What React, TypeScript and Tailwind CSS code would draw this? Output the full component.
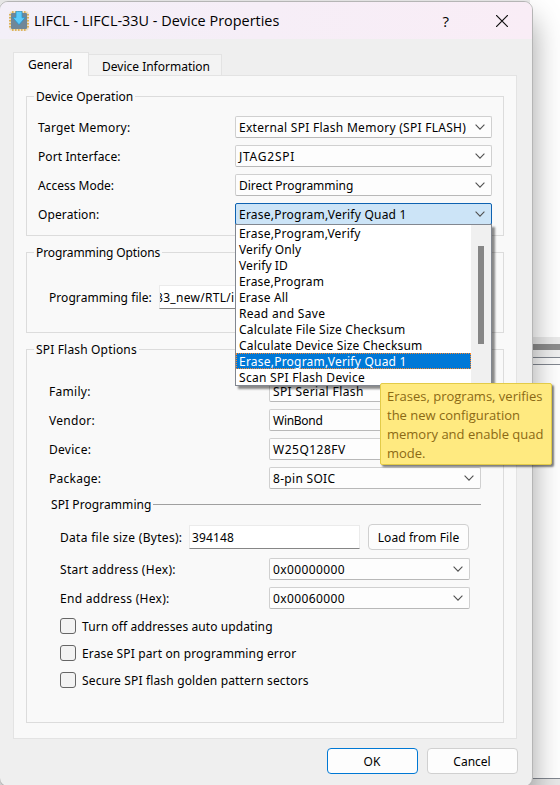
import type { ReactNode } from 'react';

function Chevron() {
  return (
    <svg className="ml-auto h-[6px] w-[10px] shrink-0" viewBox="0 0 10 6" fill="none" stroke="#505050" strokeWidth="1.1">
      <path d="M0.6 0.7 L5 5.1 L9.4 0.7" />
    </svg>
  );
}

function Select({ value, className, text = '', open = false }: { value: string; className: string; text?: string; open?: boolean }) {
  return (
    <div
      className={`flex h-[22px] shrink-0 items-center rounded-[2px] border pl-[3px] pr-[6px] ${
        open ? 'border-[#0e62b1] bg-[#cce4f7]' : 'border-[#d0d0d0] border-b-[#b8b8b8] bg-[#fdfdfd]'
      } ${className}`}
    >
      <span className={`pt-[2px] ${text}`}>{value}</span>
      <Chevron />
    </div>
  );
}

function Group({ title, titleClass = '', className, children }: { title: string; titleClass?: string; className: string; children: ReactNode }) {
  return (
    <section className={`flex flex-col border border-[#dcdcdc] ${className}`}>
      <div className="-mt-[9px] ml-[7px] flex h-4 items-center self-start bg-[#f9f9f9] px-[2px]">
        <span className={`pt-[2px] ${titleClass}`}>{title}</span>
      </div>
      {children}
    </section>
  );
}

function Row({ label, labelClass = '', children }: { label: string; labelClass?: string; children: ReactNode }) {
  return (
    <div className="flex h-[22px] items-center justify-between">
      <span className={`pt-[2px] ${labelClass}`}>{label}</span>
      {children}
    </div>
  );
}

function Check({ label, className }: { label: string; className: string }) {
  return (
    <div className="flex h-4 items-center gap-[6px]">
      <span className="h-4 w-4 rounded-[3px] border border-[#666] bg-[#f3f3f3]" />
      <span className={`pt-[2px] ${className}`}>{label}</span>
    </div>
  );
}

const operations = [
  { name: 'Erase,Program,Verify', fit: 'tracking-[0.2px]' },
  { name: 'Verify Only', fit: 'tracking-[0.1px]' },
  { name: 'Verify ID', fit: 'tracking-[0.1px]' },
  { name: 'Erase,Program', fit: 'tracking-[0.15px]' },
  { name: 'Erase All', fit: 'tracking-[0.2px]' },
  { name: 'Read and Save', fit: 'tracking-[0.3px]' },
  { name: 'Calculate File Size Checksum', fit: 'tracking-[0.21px]' },
  { name: 'Calculate Device Size Checksum', fit: 'tracking-[0.17px]' },
  { name: 'Erase,Program,Verify Quad 1', fit: 'tracking-[0.22px]' },
  { name: 'Scan SPI Flash Device', fit: 'tracking-[0.29px]' },
];

function ChipIcon() {
  return (
    <svg className="ml-[9px] h-5 w-5" viewBox="0 0 20 20">
      <rect x="1" y="1" width="18" height="18" rx="1" fill="#e9dcc0" stroke="#e9dcc0" strokeWidth="1" />
      <path d="M3 1h14M3 19h14M1 3v14M19 3v14" stroke="#d6a437" strokeWidth="1.6" strokeDasharray="1.6 1.4" />
      <rect x="2" y="2" width="16" height="16" rx="1" fill="#6f8798" />
      <path d="M7 0.4h6v6.2h3.2L10 13.8 3.8 6.6H7z" fill="#5bcbfa" stroke="#2b94cb" strokeWidth="0.8" />
    </svg>
  );
}

export default function App() {
  return (
    <div className="relative h-[785px] w-[560px] overflow-hidden bg-white font-['Noto_Sans','DejaVu_Sans',sans-serif] text-[12px] leading-4 whitespace-nowrap text-black">
      {/* window lying behind the dialog */}
      <div className="absolute inset-y-0 right-0 flex w-[40px] flex-col">
        <div className="h-[337px] bg-white" />
        <div className="h-[7px] bg-[#eaeaea]" />
        <div className="h-[6px] bg-[#8c8c8c]" />
        <div className="h-[7px] bg-[#f0f0f0]" />
        <div className="h-[8px] border-y border-[#828790] bg-[#fafafa]" />
        <div className="h-[413px] bg-white" />
        <div className="h-[7px] border-t border-[#828790] bg-[#e8e8e8]" />
      </div>
      <div className="absolute inset-x-0 top-0 h-4 w-[530px] bg-[#ececec]" />

      <main className="absolute top-[1px] -left-[1px] flex h-[786px] w-[534px] flex-col overflow-hidden rounded-[9px] border border-[#b5b5b5] bg-[#efefef] shadow-[0_18px_30px_rgba(0,0,0,0.38)]">
        <header className="flex h-[37px] shrink-0 items-center bg-linear-to-r from-[#f3eff8] to-[#f9edf6]">
          <ChipIcon />
          <h1 className="ml-[5px] font-['Open_Sans','Noto_Sans',sans-serif] text-[14.4px] tracking-[0.02px]">LIFCL - LIFCL-33U - Device Properties</h1>
          <span className="mr-[47px] ml-auto font-['Open_Sans','Noto_Sans',sans-serif] text-[15px]">?</span>
          <svg className="mr-[24px] h-3 w-3" viewBox="0 0 12 12" stroke="#111" strokeWidth="1.2">
            <path d="M0 0L12 12M12 0L0 12" />
          </svg>
        </header>

        <nav className="mt-[13px] ml-[13px] flex h-[24px] shrink-0 items-end">
          <div className="z-10 flex h-[24px] w-[76px] items-start border border-b-0 border-[#e3e3e3] bg-[#f9f9f9] pt-[4px] pl-[14px]">
            <span>General</span>
          </div>
          <div className="mb-[1px] flex h-[21px] w-[133px] items-center border border-b-0 border-l-0 border-[#e3e3e3] bg-[#f3f3f3] pt-[3px] pl-[13px]">
            <span>Device Information</span>
          </div>
        </nav>

        <div className="-mt-[1px] ml-[13px] flex h-[664px] w-[504px] shrink-0 flex-col border border-[#e3e3e3] bg-[#f9f9f9] pt-[20px] pl-[12px]">
          <Group title="Device Operation" className="h-[140px] w-[478px]">
            <div className="mt-[12px] mr-[11px] ml-[11px] flex flex-col gap-[7px]">
              <Row label="Target Memory:" labelClass="tracking-[0.22px]"><Select value="External SPI Flash Memory (SPI FLASH)" text="tracking-[0.27px]" className="w-[257px]" /></Row>
              <Row label="Port Interface:" labelClass="tracking-[0.1px]"><Select value="JTAG2SPI" text="tracking-[0.75px]" className="w-[257px]" /></Row>
              <Row label="Access Mode:"><Select value="Direct Programming" text="tracking-[-0.04px]" className="w-[257px]" /></Row>
              <Row label="Operation:" labelClass="tracking-[0.1px]"><Select value="Erase,Program,Verify Quad 1" text="tracking-[0.22px]" className="w-[257px]" open /></Row>
            </div>
          </Group>

          <Group title="Programming Options" titleClass="tracking-[-0.1px]" className="mt-[16px] h-[81px] w-[478px]">
            <div className="mt-[25px] ml-[22px] flex h-6 items-center">
              <span className="w-[110px] pt-[2px] tracking-[0.06px]">Programming file:</span>
              <div className="flex h-6 w-[300px] items-center overflow-hidden border border-[#ebebeb] border-b-[#868686] bg-white">
                <span className="-ml-[4px] pt-[2px] tracking-[0.3px]">33_new/RTL/i</span>
              </div>
            </div>
          </Group>

          <Group title="SPI Flash Options" titleClass="tracking-[0.17px]" className="mt-[16px] h-[374px] w-[478px]">
            <div className="mt-[23px] mr-[22px] ml-[22px] flex flex-col gap-[7px]">
              <Row label="Family:" labelClass="tracking-[0.3px]"><Select value="SPI Serial Flash" text="tracking-[0.38px]" className="w-[212px]" /></Row>
              <Row label="Vendor:" labelClass="tracking-[0.28px]"><Select value="WinBond" text="tracking-[-0.28px]" className="w-[212px]" /></Row>
              <Row label="Device:" labelClass="tracking-[0.28px]"><Select value="W25Q128FV" text="tracking-[0.5px]" className="w-[212px]" /></Row>
              <Row label="Package:" labelClass="tracking-[0.25px]"><Select value="8-pin SOIC" text="tracking-[0.3px]" className="w-[212px]" /></Row>
            </div>
            <div className="mt-[7px] mr-[22px] ml-[24px] flex h-4 items-center gap-[2px]">
              <span className="pt-[2px] tracking-[0.07px]">SPI Programming</span>
              <span className="h-px flex-1 bg-[#a0a0a0]" />
            </div>
            <div className="mt-[12px] ml-[33px] flex h-[26px] items-center">
              <span className="w-[129px] pt-[2px] tracking-[0.3px]">Data file size (Bytes):</span>
              <div className="flex h-6 w-[171px] items-center border border-[#ebebeb] border-b-[#868686] bg-white pl-[2px]">
                <span className="pt-[2px] tracking-[0.12px]">394148</span>
              </div>
              <div className="ml-[8px] flex h-[26px] w-[101px] items-center justify-center rounded-[4px] border border-[#d0d0d0] bg-[#fdfdfd]">
                <span className="pt-[2px] tracking-[0.08px]">Load from File</span>
              </div>
            </div>
            <div className="mt-[8px] mr-[33px] ml-[33px] flex flex-col gap-[7px]">
              <Row label="Start address (Hex):" labelClass="tracking-[0.3px]"><Select value="0x00000000" text="tracking-[0.4px]" className="w-[201px]" /></Row>
              <Row label="End address (Hex):" labelClass="tracking-[0.29px]"><Select value="0x00060000" text="tracking-[0.4px]" className="w-[201px]" /></Row>
            </div>
            <div className="mt-[9px] ml-[33px] flex flex-col gap-[11px]">
              <Check label="Turn off addresses auto updating" className="tracking-[0.09px]" />
              <Check label="Erase SPI part on programming error" className="tracking-[0.14px]" />
              <Check label="Secure SPI flash golden pattern sectors" className="tracking-[0.16px]" />
            </div>
          </Group>
        </div>

        <footer className="mt-[9px] mr-[14px] flex shrink-0 justify-end gap-[9px]">
          <div className="flex h-[26px] w-[91px] items-center justify-center rounded-[4px] border border-[#0078d4] bg-[#fdfdfd] pt-[2px] pr-[1px]">OK</div>
          <div className="flex h-[26px] w-[91px] items-center justify-center rounded-[4px] border border-[#d0d0d0] bg-[#fdfdfd] pt-[2px] pr-[1px]">Cancel</div>
        </footer>
      </main>

      {/* open Operation list */}
      <div className="absolute top-[224px] left-[235px] flex h-[162px] w-[257px] border border-[#828790] bg-white shadow-[3px_3px_2px_rgba(0,0,0,0.45)]">
        <ul className="w-[235px]">
          {operations.map((op) => (
            <li
              key={op.name}
              className={`flex h-4 items-center ${
                op.name.endsWith('Quad 1') ? 'border border-dotted border-[#ff8728] bg-[#0078d7] pl-[2px] text-white' : 'pl-[3px]'
              }`}
            >
              <span className={`pt-[2px] ${op.fit}`}>{op.name}</span>
            </li>
          ))}
        </ul>
        <div className="flex w-[20px] justify-center bg-[#f0f0f0] pt-[21px]">
          <span className="h-[98px] w-[6px] bg-[#868686]" />
        </div>
      </div>

      <div className="absolute top-[383px] left-[380px] h-[82px] w-[172px] rounded-[2px] border border-[#e3cb48] bg-[#ffea80] pt-[3px] pl-[6px] font-['Open_Sans','Noto_Sans',sans-serif] text-[13px] leading-[19px] text-[#8b6914] shadow-[2px_2px_2px_rgba(0,0,0,0.5)]">
        <p>Erases, programs, verifies</p>
        <p>the new configuration</p>
        <p>memory and enable quad</p>
        <p>mode.</p>
      </div>
    </div>
  );
}
